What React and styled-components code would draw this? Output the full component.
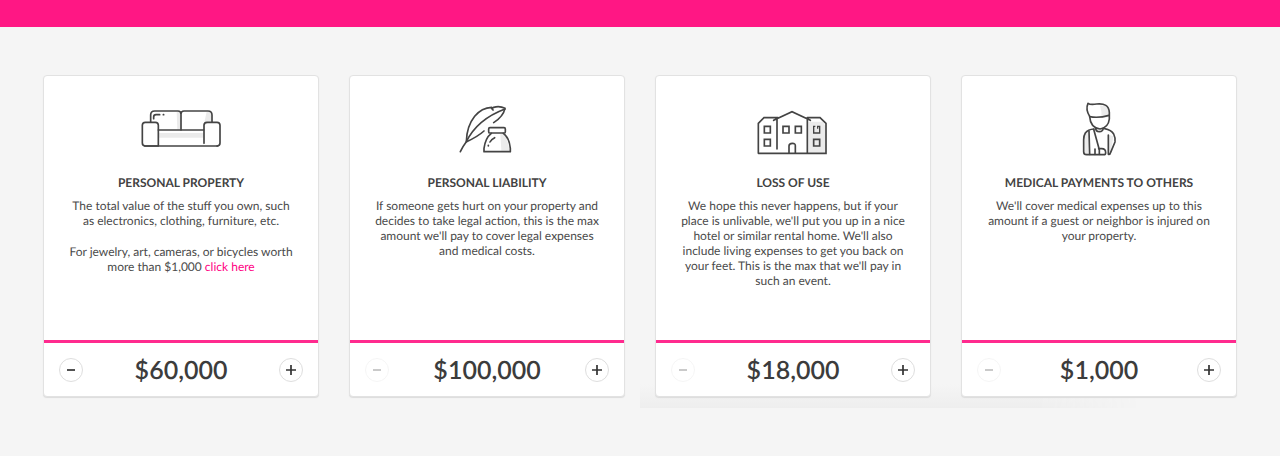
import React, { useState } from 'react'
import styled, { createGlobalStyle } from 'styled-components'

const GlobalStyle = createGlobalStyle`
    * {
        box-sizing: border-box;
    }
    body {
        margin: 0;
        background-color: #f5f5f5;
        color: #4a4a4a;
        font-family: Lato, "Liberation Sans", sans-serif;
        text-rendering: geometricPrecision;
    }
`
const Banner = styled.header`
    height: 27px;
    background-color: #ff1784;
`
const Coverages = styled.main`
    position: relative;
    display: grid;
    grid-template-columns: repeat(4, 1fr);
    gap: 30px;
    margin-top: 48px;
    padding: 0 43px 11px;
`
// soft shade under the last two cards
const Shade = styled.div`
    position: absolute;
    left: 50%;
    right: 11%;
    bottom: 0;
    height: 24px;
    background: linear-gradient(to bottom, #f5f5f5, #eeeeee);
    mask-image: linear-gradient(to right, #000 80%, transparent);
`
const Card = styled.section`
    position: relative;
    display: flex;
    flex-direction: column;
    background-color: #fff;
    border: 1px solid #e2e2e2;
    border-radius: 4px;
    box-shadow: 0 1px 1px #dcdcdc;
`
const Body = styled.div`
    flex: 1;
    min-height: 264px;
    padding: 19px 23px;
    text-align: center;
`
const Icon = styled.svg`
    display: block;
    width: 100px;
    height: 64px;
    margin: 0 auto 16px;
    fill: none;
    stroke: #444;
    stroke-width: 5;
    stroke-linecap: round;
    stroke-linejoin: round;

    .tone {
        fill: #ebebeb;
        stroke: none;
    }
`
const Title = styled.h2`
    margin: 0 0 7px;
    font-size: 12px;
    line-height: 16px;
    font-weight: 700;
    text-transform: uppercase;
    color: #424242;
`
const Text = styled.p`
    margin: 0 0 16px;
    font-size: 12px;
    line-height: 15px;
`
const Link = styled.a`
    color: #ff0083;
    text-decoration: none;
`
const Footer = styled.div`
    display: flex;
    align-items: center;
    justify-content: space-between;
    padding: 14px 15px 13px;
    border-top: 3px solid #ff2a8e;
`
const Amount = styled.output`
    font-size: 25px;
    line-height: 26px;
    font-weight: 600;
    color: #3c3c3c;
`
const RoundButton = styled.button`
    display: flex;
    align-items: center;
    justify-content: center;
    width: 24px;
    height: 24px;
    padding: 0;
    border: 1px solid #dedede;
    border-radius: 50%;
    background-color: #fff;
    color: #333;
    cursor: pointer;

    &:disabled {
        opacity: 0.3;
        cursor: default;
    }
`
const Sign = styled.svg`
    width: 10px;
    height: 10px;
    fill: none;
    stroke: currentColor;
    stroke-width: 1.7;
`

const Sofa = () => (
    <Icon viewBox="3 0 300 192" aria-hidden="true">
        <path className="tone" d="M86 114h134v14H86zM140 50h12v54h-10zM230 50h13v33h-8l-11 8v13h-6z" />
        <path d="M62 81V60q0-12 12-12h70q9 0 9 9v48M153 57q0-9 9-9h72q12 0 12 12v21" />
        <path d="M85 105h136M44 153h219" />
        <path d="M85 145v8H46q-9 0-9-9V91q0-9 9-9h30q9 0 9 9v54M222 145V91q0-9 9-9h30q9 0 9 9v53q0 9-9 9" />
        <path d="M71 71v-5q0-7 7-7h11M100 59h1" />
    </Icon>
)

const Quill = () => (
    <Icon viewBox="-9 0 300 192" aria-hidden="true">
        <path className="tone" d="M181 117h10q13 14 17 50h-24z" />
        <path d="M61 170q8-17 18-30Q112 73 195 42" />
        <path d="M79 140Q80 94 104 64q21-26 51-27M159 45q-4-5 2-8 18-5 34 3-5 24-34 43M153 38l4 5" />
        <path d="M80 140q33-15 52-32" />
        <path d="M150 98h42q4 0 4 4v8q0 4-4 4h-42q-4 0-4-4v-8q0-4 4-4z" />
        <path d="M154 115q-18 14-22 45v10h79v-10q-3-32-21-45" />
        <path d="M164 128q-10 5-14 13M145 151v2" />
    </Icon>
)

const House = () => (
    <Icon viewBox="-6 0 300 192" aria-hidden="true">
        <path className="tone" d="M190 80h43l8 12v81h-51z" />
        <path d="M96 162V73M86 76l55-26 55 26M187 73v101M40 175V85l17-17h42M187 68h38l18 17v90H40" strokeLinejoin="miter" />
        <path d="M58 94h18v20H58zM58 133h18v20H58zM114 94h18v20h-18zM151 94h18v20h-18zM206 133h18v20h-18z" strokeLinejoin="miter" />
        <path d="M211 94h-5v20h18V94h-6v7" strokeLinejoin="miter" strokeLinecap="butt" strokeWidth="4" />
        <path d="M132 174v-21q0-8 10-8t9 8v21" />
    </Icon>
)

const Patient = () => (
    <Icon viewBox="-33 0 300 192" aria-hidden="true">
        <path className="tone" d="M120 32q22-3 26 14v20l-22 3q3-18-4-37zM74 116l12-10v72H74zM148 120l12 4-8 50h-6z" />
        <path d="M89 64Q76 43 84 25q7 5 26 2 36-4 38 25v20q-3 26-28 30-29-4-31-38z" />
        <path d="M89 65q27 5 58-4M107 99q0 11 11 11t12-11" />
        <path d="M102 102q-18 1-26 12-5 8-5 20v36q0 9 9 9h51q6 0 6-6 0-12-12-12h-9" />
        <path d="M101 103l17 61v14M87 108l2 70M105 162v16M134 101q20 4 27 16 6 12 4 24l-13 31q-1 6-6 6M145 120v58" />
    </Icon>
)

const coverages = [
    {
        title: 'Personal Property',
        icon: Sofa,
        start: 60000,
        min: 10000,
        step: 10000,
        text: (
            <>
                <Text>The total value of the stuff you own, such as electronics, clothing, furniture, etc.</Text>
                <Text>
                    For jewelry, art, cameras, or bicycles worth more than $1,000 <Link href="#extra">click here</Link>
                </Text>
            </>
        ),
    },
    {
        title: 'Personal Liability',
        icon: Quill,
        start: 100000,
        min: 100000,
        step: 100000,
        text: (
            <Text>
                If someone gets hurt on your property and decides to take legal action, this is the max amount we'll
                pay to cover legal expenses and medical costs.
            </Text>
        ),
    },
    {
        title: 'Loss of Use',
        icon: House,
        start: 18000,
        min: 18000,
        step: 1000,
        text: (
            <Text>
                We hope this never happens, but if your place is unlivable, we'll put you up in a nice hotel or similar
                rental home. We'll also include living expenses to get you back on your feet. This is the max that
                we'll pay in such an event.
            </Text>
        ),
    },
    {
        title: 'Medical Payments to Others',
        icon: Patient,
        start: 1000,
        min: 1000,
        step: 1000,
        text: (
            <Text>
                We'll cover medical expenses up to this amount if a guest or neighbor is injured on your property.
            </Text>
        ),
    },
]

function Coverage({ item }) {
    const [amount, setAmount] = useState(item.start)
    const Picture = item.icon

    return (
        <Card>
            <Body>
                <Picture />
                <Title>{item.title}</Title>
                {item.text}
            </Body>
            <Footer>
                <RoundButton
                    aria-label={`Decrease ${item.title}`}
                    disabled={amount <= item.min}
                    onClick={() => setAmount(amount - item.step)}
                >
                    <Sign viewBox="0 0 10 10"><path d="M1 5h8" /></Sign>
                </RoundButton>
                <Amount>${amount.toLocaleString('en-US')}</Amount>
                <RoundButton
                    aria-label={`Increase ${item.title}`}
                    onClick={() => setAmount(amount + item.step)}
                >
                    <Sign viewBox="0 0 10 10"><path d="M0 5h10M5 0v10" /></Sign>
                </RoundButton>
            </Footer>
        </Card>
    )
}

function App() {
    return (
        <>
            <GlobalStyle />
            <Banner />
            <Coverages>
                <Shade />
                {coverages.map((item) => (
                    <Coverage key={item.title} item={item} />
                ))}
            </Coverages>
        </>
    )
}

export default App
